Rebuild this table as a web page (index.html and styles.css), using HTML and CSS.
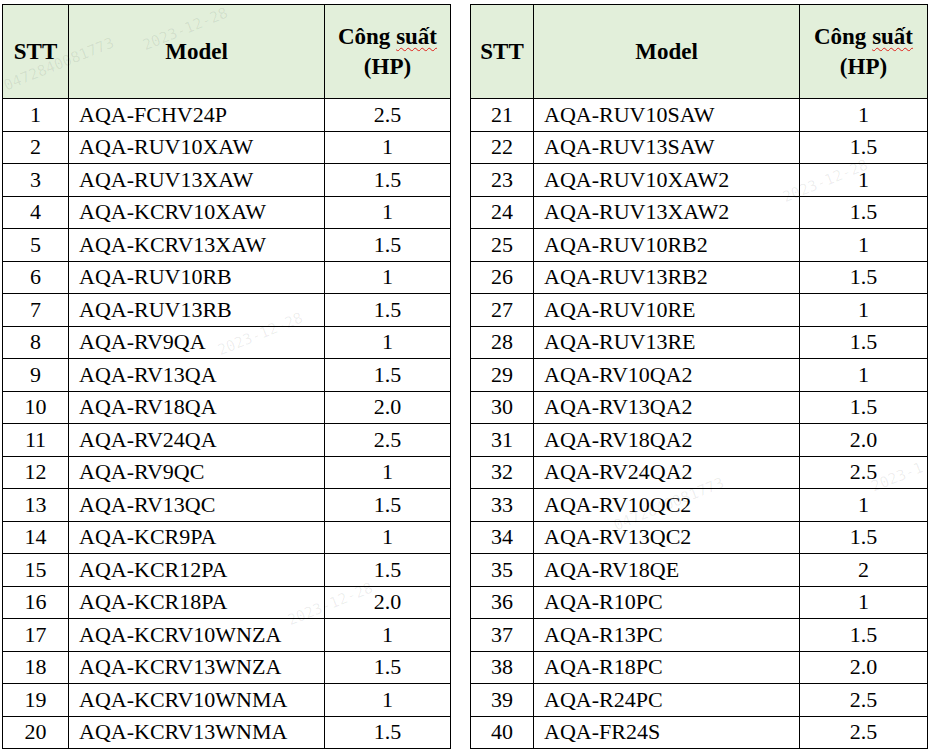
FILE: index.html
```html
<!DOCTYPE html>
<html lang="vi">
<head>
<meta charset="utf-8">
<title>Danh sách model</title>
<link rel="stylesheet" href="styles.css">
</head>
<body>
<div class="page">
  <table class="grid left">
    <colgroup><col class="c1"><col class="c2"><col class="c3"></colgroup>
    <thead>
      <tr><th>STT</th><th>Model</th><th>Công <span class="spell">suất</span><br>(HP)</th></tr>
    </thead>
    <tbody>
      <tr><td>1</td><td class="m">AQA-FCHV24P</td><td>2.5</td></tr>
      <tr><td>2</td><td class="m">AQA-RUV10XAW</td><td>1</td></tr>
      <tr><td>3</td><td class="m">AQA-RUV13XAW</td><td>1.5</td></tr>
      <tr><td>4</td><td class="m">AQA-KCRV10XAW</td><td>1</td></tr>
      <tr><td>5</td><td class="m">AQA-KCRV13XAW</td><td>1.5</td></tr>
      <tr><td>6</td><td class="m">AQA-RUV10RB</td><td>1</td></tr>
      <tr><td>7</td><td class="m">AQA-RUV13RB</td><td>1.5</td></tr>
      <tr><td>8</td><td class="m">AQA-RV9QA</td><td>1</td></tr>
      <tr><td>9</td><td class="m">AQA-RV13QA</td><td>1.5</td></tr>
      <tr><td>10</td><td class="m">AQA-RV18QA</td><td>2.0</td></tr>
      <tr><td>11</td><td class="m">AQA-RV24QA</td><td>2.5</td></tr>
      <tr><td>12</td><td class="m">AQA-RV9QC</td><td>1</td></tr>
      <tr><td>13</td><td class="m">AQA-RV13QC</td><td>1.5</td></tr>
      <tr><td>14</td><td class="m">AQA-KCR9PA</td><td>1</td></tr>
      <tr><td>15</td><td class="m">AQA-KCR12PA</td><td>1.5</td></tr>
      <tr><td>16</td><td class="m">AQA-KCR18PA</td><td>2.0</td></tr>
      <tr><td>17</td><td class="m">AQA-KCRV10WNZA</td><td>1</td></tr>
      <tr><td>18</td><td class="m">AQA-KCRV13WNZA</td><td>1.5</td></tr>
      <tr><td>19</td><td class="m">AQA-KCRV10WNMA</td><td>1</td></tr>
      <tr><td>20</td><td class="m">AQA-KCRV13WNMA</td><td>1.5</td></tr>
    </tbody>
  </table>
  <table class="grid right">
    <colgroup><col class="c1"><col class="c2"><col class="c3"></colgroup>
    <thead>
      <tr><th>STT</th><th>Model</th><th>Công <span class="spell">suất</span><br>(HP)</th></tr>
    </thead>
    <tbody>
      <tr><td>21</td><td class="m">AQA-RUV10SAW</td><td>1</td></tr>
      <tr><td>22</td><td class="m">AQA-RUV13SAW</td><td>1.5</td></tr>
      <tr><td>23</td><td class="m">AQA-RUV10XAW2</td><td>1</td></tr>
      <tr><td>24</td><td class="m">AQA-RUV13XAW2</td><td>1.5</td></tr>
      <tr><td>25</td><td class="m">AQA-RUV10RB2</td><td>1</td></tr>
      <tr><td>26</td><td class="m">AQA-RUV13RB2</td><td>1.5</td></tr>
      <tr><td>27</td><td class="m">AQA-RUV10RE</td><td>1</td></tr>
      <tr><td>28</td><td class="m">AQA-RUV13RE</td><td>1.5</td></tr>
      <tr><td>29</td><td class="m">AQA-RV10QA2</td><td>1</td></tr>
      <tr><td>30</td><td class="m">AQA-RV13QA2</td><td>1.5</td></tr>
      <tr><td>31</td><td class="m">AQA-RV18QA2</td><td>2.0</td></tr>
      <tr><td>32</td><td class="m">AQA-RV24QA2</td><td>2.5</td></tr>
      <tr><td>33</td><td class="m">AQA-RV10QC2</td><td>1</td></tr>
      <tr><td>34</td><td class="m">AQA-RV13QC2</td><td>1.5</td></tr>
      <tr><td>35</td><td class="m">AQA-RV18QE</td><td>2</td></tr>
      <tr><td>36</td><td class="m">AQA-R10PC</td><td>1</td></tr>
      <tr><td>37</td><td class="m">AQA-R13PC</td><td>1.5</td></tr>
      <tr><td>38</td><td class="m">AQA-R18PC</td><td>2.0</td></tr>
      <tr><td>39</td><td class="m">AQA-R24PC</td><td>2.5</td></tr>
      <tr><td>40</td><td class="m">AQA-FR24S</td><td>2.5</td></tr>
    </tbody>
  </table>
  <div class="wm w1">2023-12-28</div>
  <div class="wm w2">0472840081773</div>
  <div class="wm w3">2023-12-28</div>
  <div class="wm w4">2023-12-28</div>
  <div class="wm w5">0472840081773</div>
  <div class="wm w6">2023-12-28</div>
  <div class="wm w7">2023-1</div>
</div>
</body>
</html>
```
FILE: styles.css
```css
html, body {
  margin: 0;
  padding: 0;
  background: #ffffff;
}
.page {
  position: relative;
  display: flex;
  gap: 19px;
  padding: 4px 0 0 2px;
  color: #000;
  font-family: "Liberation Serif", "Times New Roman", serif;
}
.grid {
  border-collapse: collapse;
  table-layout: fixed;
}
.grid.left { width: 448px; }
.grid.right { width: 457px; }
.left .c1 { width: 66px; }
.left .c2 { width: 256px; }
.left .c3 { width: 126px; }
.right .c1 { width: 63px; }
.right .c2 { width: 266px; }
.right .c3 { width: 128px; }
.grid th, .grid td {
  font-family: "Liberation Serif", "Times New Roman", serif;
  border: 1px solid #000;
  padding: 0;
  text-align: center;
  vertical-align: middle;
}
.grid th {
  background: #e2efda;
  height: 93px;
  font-size: 23px;
  font-weight: bold;
  line-height: 30px;
}
.grid td {
  height: 31.5px;
  font-size: 22px;
  line-height: 24px;
}
.grid td.m {
  text-align: left;
  padding-left: 10px;
}
.spell {
  text-decoration: underline wavy #e0201a;
  text-decoration-thickness: 1px;
  text-underline-offset: 3px;
}
.wm {
  position: absolute;
  font-family: "DejaVu Sans Mono", monospace;
  font-size: 15px;
  color: rgba(0, 0, 0, 0.07);
  transform: rotate(-22deg);
  white-space: nowrap;
  pointer-events: none;
}
.w1 { left: 140px; top: 20px; }
.w2 { left: 0px; top: 55px; }
.w3 { left: 215px; top: 325px; }
.w4 { left: 780px; top: 172px; }
.w5 { left: 610px; top: 495px; }
.w6 { left: 285px; top: 595px; }
.w7 { left: 870px; top: 468px; }
```
